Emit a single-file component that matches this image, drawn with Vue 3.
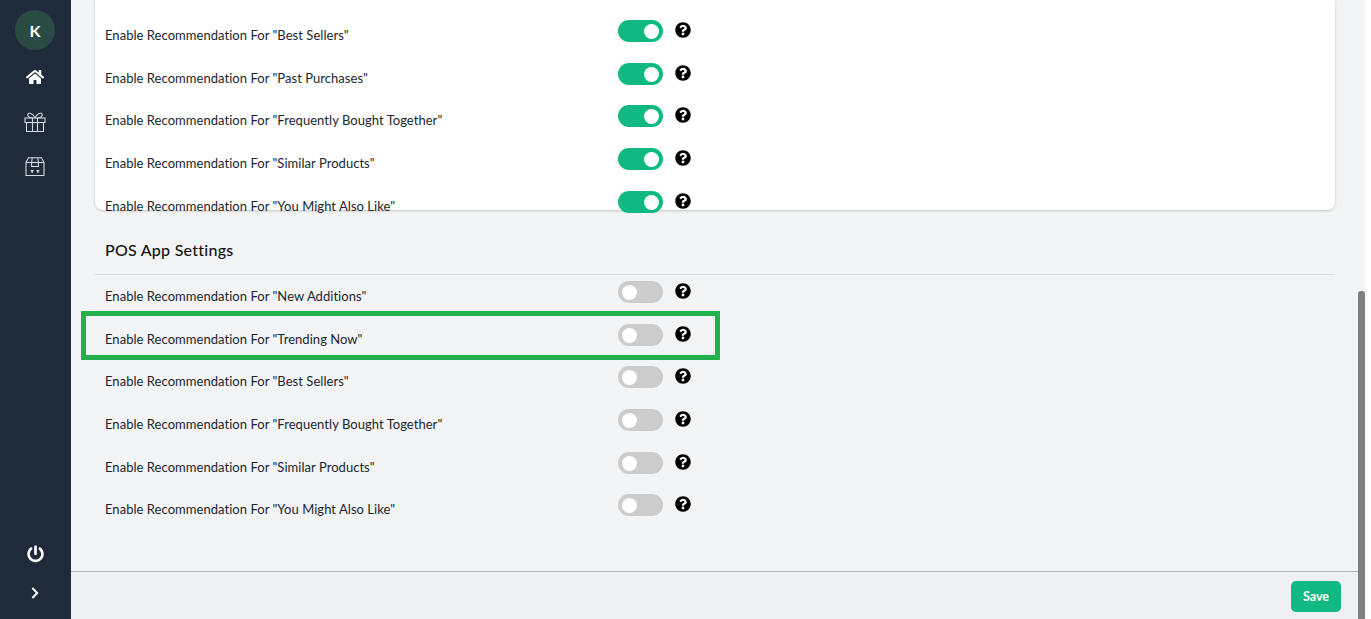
<template>
  <div class="page">
    <!-- Sidebar -->
    <aside class="sidebar">
      <div class="avatar">K</div>
      <nav class="nav">
        <svg class="nav-home" viewBox="0 0 576 512"><path fill="#fff" d="M280.37 148.26L96 300.11V464a16 16 0 0 0 16 16l112.06-.29a16 16 0 0 0 15.92-16V368a16 16 0 0 1 16-16h64a16 16 0 0 1 16 16v95.64a16 16 0 0 0 16 16.05L464 480a16 16 0 0 0 16-16V300L295.67 148.26a12.19 12.19 0 0 0-15.3 0zM571.6 251.47L488 182.56V44.05a12 12 0 0 0-12-12h-56a12 12 0 0 0-12 12v72.61L318.47 43a48 48 0 0 0-61 0L4.34 251.47a12 12 0 0 0-1.6 16.9l25.5 31A12 12 0 0 0 45.15 301l235.22-193.74a12.19 12.19 0 0 1 15.3 0L530.9 301a12 12 0 0 0 16.9-1.6l25.5-31a12 12 0 0 0-1.7-16.93z" /></svg>
        <svg class="nav-gift" viewBox="0 0 22 20" fill="none" stroke="#d5d8dc" stroke-width="1.1">
          <rect x="1" y="6" width="20" height="4.5" />
          <path d="M2.5 10.5V19.5H19.5V10.5" />
          <path d="M8.5 6V19.5M13.5 6V19.5" />
          <path d="M11 6C9 1 4.5 0 3.8 2.5C3.3 4.5 6 6 8.5 6M11 6C13 1 17.5 0 18.2 2.5C18.7 4.5 16 6 13.5 6" />
        </svg>
        <svg class="nav-store" viewBox="0 0 20 19" fill="none" stroke="#d5d8dc" stroke-width="1.1">
          <path d="M1 18.5V5.5L3.5 .8H16.5L19 5.5V18.5Z" />
          <path d="M1 5.5H19" />
          <path d="M7.2 .8L6.6 5.5M12.8 .8L13.4 5.5" />
          <rect x="6.6" y="5.5" width="6.8" height="4" />
          <path d="M5.6 13.6H8.6M7.1 13.6V16M11.4 13.6H14.4M12.9 13.6V16" stroke-width="1.4" />
        </svg>
      </nav>
      <div class="side-bottom">
        <svg class="power" viewBox="0 0 512 512"><path fill="#fff" d="M400 54.1c63 45 104 118.6 104 201.9 0 136.8-110.8 247.7-247.5 248C120 504.3 8.2 393 8 256.4 7.9 173.1 48.9 99.3 111.8 54.2c11.7-8.3 28-4.8 35 7.7L162.6 90c5.9 10.5 3.1 23.8-6.6 31-41.5 30.8-68 79.6-68 134.9-.1 92.3 74.5 168.1 168 168.1 91.6 0 168.6-74.2 168-169.1-.3-51.8-24.7-101.8-68.1-134-9.7-7.2-12.4-20.5-6.5-30.9l15.8-28.1c7-12.4 23.2-16.1 34.8-7.8zM296 264V24c0-13.3-10.7-24-24-24h-32c-13.3 0-24 10.7-24 24v240c0 13.3 10.7 24 24 24h32c13.3 0 24-10.7 24-24z" /></svg>
        <svg class="chevron" viewBox="0 0 8 12" fill="none" stroke="#fff" stroke-width="1.9"><path d="M1.4 1L6.2 6L1.4 11" /></svg>
      </div>
    </aside>

    <!-- Main column -->
    <main class="main">
      <div class="scrollbar"></div>
      <div class="content">
        <section class="card">
          <div v-for="label in webRows" :key="label" class="row">
            <span class="row-label">Enable Recommendation For "{{ label }}"</span>
            <span class="toggle on"><i class="knob"></i></span>
            <svg class="help" viewBox="0 0 512 512"><path :d="helpPath" /></svg>
          </div>
        </section>

        <h2 class="section-title">POS App Settings</h2>

        <section class="pos-list">
          <div v-for="label in posRows" :key="label" class="row">
            <div v-if="label === 'Trending Now'" class="highlight"></div>
            <span class="row-label">Enable Recommendation For "{{ label }}"</span>
            <span class="toggle"><i class="knob"></i></span>
            <svg class="help" viewBox="0 0 512 512"><path :d="helpPath" /></svg>
          </div>
        </section>
      </div>
      <footer class="footer">
        <button class="save">Save</button>
      </footer>
    </main>
  </div>
</template>

<script setup>
const webRows = ['Best Sellers', 'Past Purchases', 'Frequently Bought Together', 'Similar Products', 'You Might Also Like']
const posRows = ['New Additions', 'Trending Now', 'Best Sellers', 'Frequently Bought Together', 'Similar Products', 'You Might Also Like']

const helpPath = 'M504 256c0 136.997-111.043 248-248 248S8 392.997 8 256C8 119.083 119.043 8 256 8s248 111.083 248 248zM262.655 90c-54.497 0-89.255 22.957-116.549 63.758-3.536 5.286-2.353 12.415 2.715 16.258l34.699 26.31c5.205 3.947 12.621 3.008 16.665-2.122 17.864-22.658 30.113-35.797 57.303-35.797 20.429 0 45.698 13.148 45.698 32.958 0 14.976-12.363 22.667-32.534 33.976C247.128 238.528 216 254.941 216 296v4c0 6.627 5.373 12 12 12h56c6.627 0 12-5.373 12-12v-1.333c0-28.462 83.186-29.647 83.186-106.667 0-58.002-60.165-102-116.531-102zM256 338c-25.365 0-46 20.635-46 46 0 25.364 20.635 46 46 46s46-20.636 46-46c0-25.365-20.635-46-46-46z'
</script>

<style>
html, body {
  margin: 0;
  background: #fff;
  overflow: hidden;
}
</style>

<style scoped>
.page {
  display: flex;
  width: 1365px;
  height: 619px;
  font-family: Lato, "Open Sans", sans-serif;
  color: #1f2933;
}

/* Sidebar */
.sidebar {
  width: 71px;
  flex-shrink: 0;
  background: #1f2a3b;
  display: flex;
  flex-direction: column;
  align-items: center;
  padding: 10px 1px 0 0;
  box-sizing: border-box;
}

.avatar {
  width: 40px;
  height: 40px;
  border-radius: 50%;
  background: #2a4b44;
  color: #fff;
  font-size: 16px;
  font-weight: 700;
  display: flex;
  align-items: center;
  justify-content: center;
}

.nav {
  margin-top: 19px;
  display: flex;
  flex-direction: column;
  align-items: center;
}

.nav-home {
  width: 18px;
  height: 16px;
}

.nav-gift {
  width: 22px;
  height: 20px;
  margin-top: 27px;
}

.nav-store {
  width: 20px;
  height: 19px;
  margin-top: 25px;
}

.side-bottom {
  margin-top: auto;
  padding-bottom: 20px;
  display: flex;
  flex-direction: column;
  align-items: center;
  gap: 24px;
}

.power {
  width: 17px;
  height: 18px;
}

.chevron {
  width: 8px;
  height: 12px;
}

/* Main */
.main {
  position: relative;
  flex: 1;
  min-width: 0;
  display: flex;
  flex-direction: column;
  background: #f3f4f6;
}

.scrollbar {
  position: absolute;
  right: 0;
  top: 291px;
  bottom: 0;
  width: 7px;
  background: #808080;
  border-radius: 3px 3px 0 0;
}

.content {
  height: 571px;
  flex-shrink: 0;
  padding: 0 30px 0 24px;
  box-sizing: border-box;
}

.card {
  height: 210px;
  box-sizing: border-box;
  padding: 20px 10px 0;
  background: #fff;
  border-radius: 0 0 8px 8px;
  box-shadow: 0 1px 3px rgba(0, 0, 0, 0.2);
}

.section-title {
  margin: 0;
  height: 65px;
  box-sizing: border-box;
  padding: 30px 0 0 10px;
  font-size: 16px;
  line-height: 20px;
  font-weight: 500;
  letter-spacing: 0.25px;
  color: #111;
  border-bottom: 1px solid #dcdde0;
}

.pos-list {
  padding: 6px 10px 0;
}

.row {
  position: relative;
  height: 42.65px;
  display: flex;
  align-items: flex-start;
}

.row-label {
  width: 513px;
  flex-shrink: 0;
  margin-top: 6px;
  font-size: 13px;
  line-height: 18px;
  letter-spacing: 0.04px;
  color: #20262e;
  white-space: nowrap;
}

.toggle {
  position: relative;
  width: 45px;
  height: 22px;
  flex-shrink: 0;
  border-radius: 11px;
  background: #cccccc;
}

.toggle.on {
  background: #10b981;
}

.knob {
  position: absolute;
  left: 4px;
  top: 4px;
  width: 15px;
  height: 15px;
  border-radius: 50%;
  background: #fff;
}

.toggle.on .knob {
  left: 26px;
}

.help {
  width: 16px;
  height: 16px;
  margin: 2px 0 0 12px;
  fill: #000;
}

.highlight {
  position: absolute;
  left: -24px;
  top: -12.65px;
  width: 639px;
  height: 49px;
  box-sizing: border-box;
  border: 5px solid #22b14c;
}

/* Footer */
.footer {
  flex: 1;
  border-top: 1px solid #b3b3b3;
  background: #eff0f2;
  display: flex;
  align-items: flex-start;
  justify-content: flex-end;
  padding: 9px 24px 0 0;
}

.save {
  width: 50px;
  height: 31px;
  border: 0;
  border-radius: 5px;
  background: #10b981;
  color: #fff;
  font-family: Lato, sans-serif;
  font-size: 12.5px;
  font-weight: 700;
}
</style>
